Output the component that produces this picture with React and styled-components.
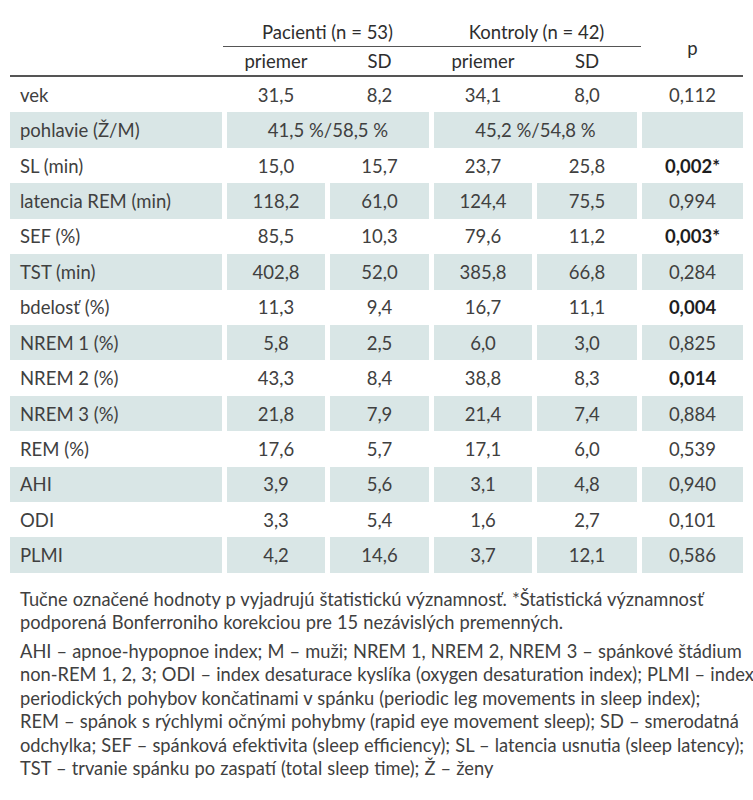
import React from "react";
import styled, { createGlobalStyle } from "styled-components";

const Global = createGlobalStyle`
  html, body { margin: 0; padding: 0; background: #fff; }
  body { font-family: "Lato", "Open Sans", sans-serif; color: #404040; }
`;

const Page = styled.div`
  padding: 0 10px;
  width: 733px;
`;

const COLS = "212px 98px 99px 98px 100px 101px";

const Header = styled.div`
  display: grid;
  grid-template-columns: ${COLS};
  grid-template-rows: 47px 28px;
  column-gap: 5px;
  border-bottom: 2px solid #555;
  font-size: 18.5px;
  color: #2e2e2e;
`;

const GroupLine = styled.div`
  grid-column: 2 / 6;
  grid-row: 1;
  margin: 0 -4px;
  display: grid;
  grid-template-columns: 1fr 1fr;
  align-items: end;
  border-bottom: 1.5px solid #555;
  padding-bottom: 3px;
`;

const GroupTitle = styled.div`
  text-align: center;
  line-height: 22px;
`;

const SubHead = styled.div`
  grid-row: 2;
  grid-column: ${(p) => p.$col};
  text-align: center;
  line-height: 28px;
`;

const PHead = styled.div`
  grid-column: 6;
  grid-row: 1 / 3;
  display: flex;
  align-items: center;
  justify-content: center;
  padding-top: 20px;
`;

const Row = styled.div`
  display: grid;
  grid-template-columns: ${COLS};
  column-gap: 5px;
  height: 35.43px;
  font-size: 18.5px;
`;

const Cell = styled.div`
  grid-column: ${(p) => p.$span || "auto"};
  background: ${(p) => (p.$shade ? "#d9e6e6" : "transparent")};
  display: flex;
  align-items: center;
  justify-content: ${(p) => (p.$left ? "flex-start" : "center")};
  padding-left: ${(p) => (p.$left ? "10px" : "0")};
  font-weight: ${(p) => (p.$bold ? 700 : 400)};
  color: ${(p) => (p.$bold ? "#1e1e1e" : "inherit")};
`;

const Notes = styled.div`
  padding: 15px 10px 0 10px;
  font-size: 18.3px;
  word-spacing: 0.4px;
  line-height: 23.5px;
  white-space: nowrap;
`;

const Para = styled.p`
  margin: 0 0 5px 0;
`;

const rows = [
  ["vek", "31,5", "8,2", "34,1", "8,0", "0,112"],
  ["pohlavie (Ž/M)", "41,5 %/58,5 %", null, "45,2 %/54,8 %", null, ""],
  ["SL (min)", "15,0", "15,7", "23,7", "25,8", "0,002*", true],
  ["latencia REM (min)", "118,2", "61,0", "124,4", "75,5", "0,994"],
  ["SEF (%)", "85,5", "10,3", "79,6", "11,2", "0,003*", true],
  ["TST (min)", "402,8", "52,0", "385,8", "66,8", "0,284"],
  ["bdelosť (%)", "11,3", "9,4", "16,7", "11,1", "0,004", true],
  ["NREM 1 (%)", "5,8", "2,5", "6,0", "3,0", "0,825"],
  ["NREM 2 (%)", "43,3", "8,4", "38,8", "8,3", "0,014", true],
  ["NREM 3 (%)", "21,8", "7,9", "21,4", "7,4", "0,884"],
  ["REM (%)", "17,6", "5,7", "17,1", "6,0", "0,539"],
  ["AHI", "3,9", "5,6", "3,1", "4,8", "0,940"],
  ["ODI", "3,3", "5,4", "1,6", "2,7", "0,101"],
  ["PLMI", "4,2", "14,6", "3,7", "12,1", "0,586"],
];

export default function App() {
  return (
    <Page>
      <Global />
      <Header>
        <GroupLine>
          <GroupTitle>Pacienti (n = 53)</GroupTitle>
          <GroupTitle>Kontroly (n = 42)</GroupTitle>
        </GroupLine>
        <SubHead $col={2}>priemer</SubHead>
        <SubHead $col={3}>SD</SubHead>
        <SubHead $col={4}>priemer</SubHead>
        <SubHead $col={5}>SD</SubHead>
        <PHead>p</PHead>
      </Header>
      {rows.map((r, i) => {
        const shade = i % 2 === 1;
        const merged = r[2] === null;
        return (
          <Row key={r[0]}>
            <Cell $shade={shade} $left>{r[0]}</Cell>
            {merged ? (
              <>
                <Cell $shade={shade} $span="span 2">{r[1]}</Cell>
                <Cell $shade={shade} $span="span 2">{r[3]}</Cell>
              </>
            ) : (
              <>
                <Cell $shade={shade}>{r[1]}</Cell>
                <Cell $shade={shade}>{r[2]}</Cell>
                <Cell $shade={shade}>{r[3]}</Cell>
                <Cell $shade={shade}>{r[4]}</Cell>
              </>
            )}
            <Cell $shade={shade} $bold={r[6]}>{r[5]}</Cell>
          </Row>
        );
      })}
      <Notes>
        <Para>
          Tučne označené hodnoty p vyjadrujú štatistickú významnosť. *Štatistická významnosť
          <br />
          podporená Bonferroniho korekciou pre 15 nezávislých premenných.
        </Para>
        <Para>
          AHI – apnoe-hypopnoe index; M – muži; NREM 1, NREM 2, NREM 3 – spánkové štádium
          <br />
          non-REM 1, 2, 3; ODI – index desaturace kyslíka (oxygen desaturation index); PLMI – index
          <br />
          periodických pohybov končatinami v spánku (periodic leg movements in sleep index);
          <br />
          REM – spánok s rýchlymi očnými pohybmy (rapid eye movement sleep); SD – smerodatná
          <br />
          odchylka; SEF – spánková efektivita (sleep efficiency); SL – latencia usnutia (sleep latency);
          <br />
          TST – trvanie spánku po zaspatí (total sleep time); Ž – ženy
        </Para>
      </Notes>
    </Page>
  );
}
